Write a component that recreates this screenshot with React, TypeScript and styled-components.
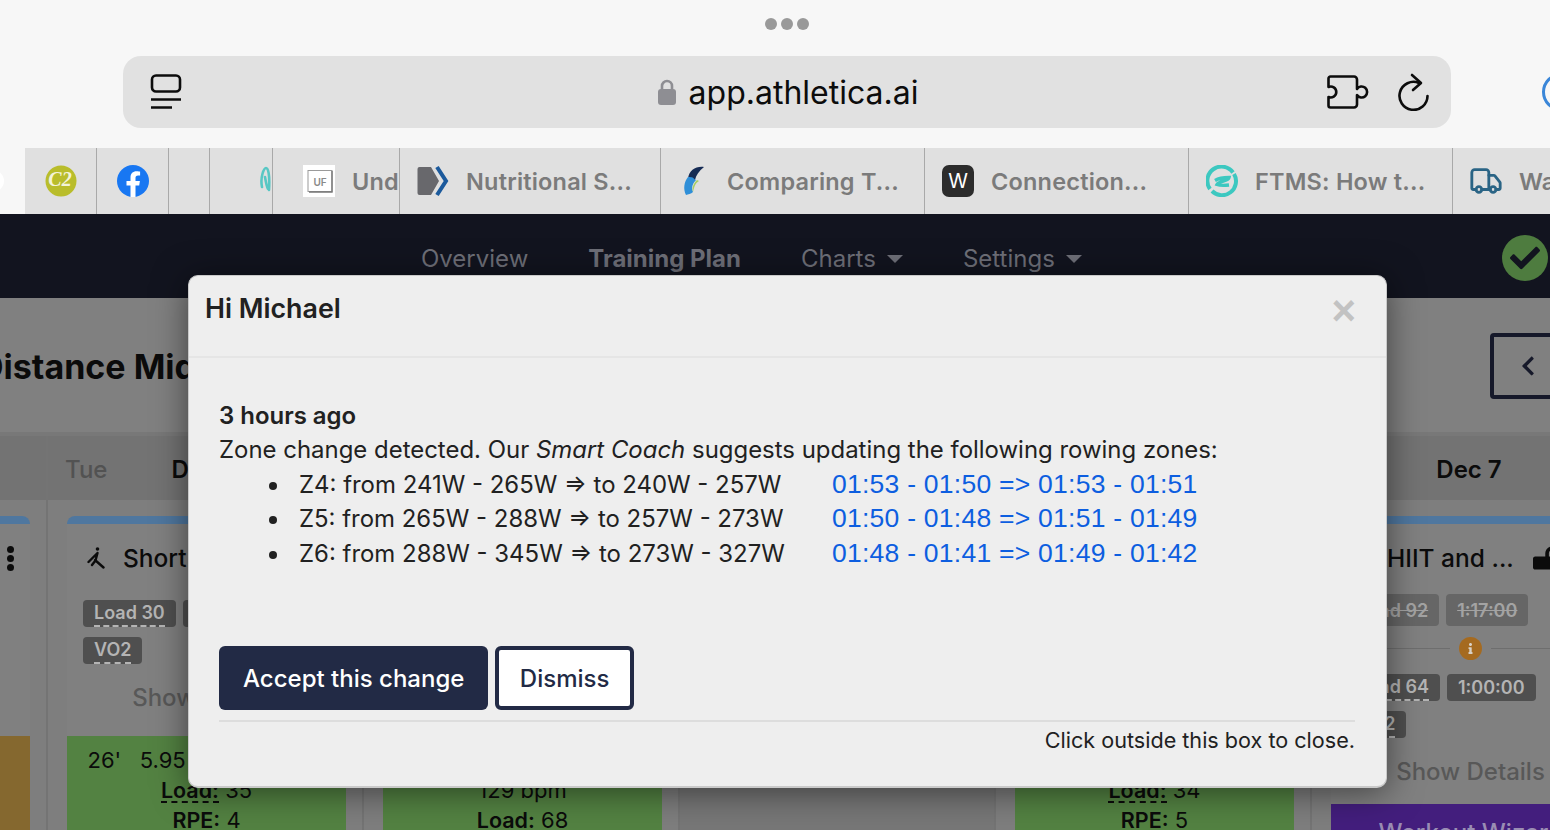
import React from "react";
import styled, { createGlobalStyle } from "styled-components";
import { Truck } from "lucide-react";
import { FaLockOpen, FaChevronLeft, FaCheck, FaInfo } from "react-icons/fa";

const GlobalStyle = createGlobalStyle`
    * { box-sizing: border-box; }
    html, body { margin: 0; padding: 0; background: #808080; }
    body { font-family: Inter, "Liberation Sans", sans-serif; }
`;

const Screen = styled.div`
    position: relative;
    width: 1550px;
    height: 830px;
    overflow: hidden;
    background: #808080;
`;

/* browser chrome */
const Chrome = styled.div`
    height: 148px;
    background: #f7f7f7;
    overflow: hidden;
`;

const DotsRow = styled.div`
    height: 56px;
    display: flex;
    align-items: center;
    justify-content: center;
    gap: 4px;
    padding: 0 0 8px 24px;
`;

const Dot = styled.span`
    width: 12px;
    height: 12px;
    border-radius: 50%;
    background: #999999;
`;

const AddressRow = styled.div`
    display: flex;
    align-items: center;
    gap: 91px;
    padding-left: 123px;
`;

const AddressBar = styled.div`
    flex: 0 0 1328px;
    height: 72px;
    display: flex;
    align-items: center;
    padding: 0 21px 0 27px;
    border-radius: 18px;
    background: #e1e1e1;
`;

const AddressSide = styled.div<{ $end?: boolean }>`
    flex: 1;
    display: flex;
    align-items: center;
    justify-content: ${p => (p.$end ? "flex-end" : "flex-start")};
    gap: 29px;
`;

const Url = styled.div`
    display: flex;
    align-items: center;
    gap: 13px;
    margin-right: 4px;
    font-size: 32px;
    color: #0c0c0c;
`;

const ProfileRing = styled.div`
    flex: none;
    width: 38px;
    height: 38px;
    border: 3px solid #3a86d8;
    border-radius: 50%;
`;

const TabStrip = styled.div`
    height: 66px;
    display: flex;
    background: #f7f7f7;
    overflow: hidden;
`;

const TabLead = styled.div`
    flex: 0 0 25px;
    display: flex;
    align-items: center;
`;

const TabLeadDot = styled.span`
    width: 22px;
    height: 22px;
    margin-left: -18px;
    border-radius: 50%;
    background: #ffffff;
`;

const Tab = styled.div<{ $width: number; $pad: number }>`
    flex: 0 0 ${p => p.$width}px;
    height: 66px;
    display: flex;
    align-items: center;
    gap: 17px;
    padding-left: ${p => p.$pad}px;
    overflow: hidden;
    background: #e0e0e0;
    border-right: 1px solid #a9a9a9;
`;

const TabIcon = styled.svg`
    flex: none;
    width: 32px;
    height: 32px;
`;

const TruckIcon = styled(Truck)`
    flex: none;
    width: 34px;
    height: 34px;
    margin: 0 -1px;
`;

const TabTitle = styled.span`
    font-size: 23.5px;
    font-weight: 600;
    letter-spacing: 0.2px;
    white-space: nowrap;
    color: #7b7b7b;
`;

/* app nav */
const AppNav = styled.nav`
    height: 84px;
    display: flex;
    align-items: center;
    padding: 4px 2px 0 421px;
    background: #12141f;
`;

const NavLink = styled.span<{ $active?: boolean }>`
    display: flex;
    align-items: center;
    gap: 11px;
    margin-right: 60px;
    font-size: 24px;
    font-weight: ${p => (p.$active ? 700 : 400)};
    color: #6e6f78;
`;

const Caret = styled.i`
    width: 0;
    height: 0;
    margin-top: 2px;
    border-left: 8px solid transparent;
    border-right: 8px solid transparent;
    border-top: 8px solid #6e6f78;
`;

const SyncBadge = styled.div`
    width: 46px;
    height: 46px;
    margin-left: auto;
    display: flex;
    align-items: center;
    justify-content: center;
    border-radius: 50%;
    background: #4e7c3f;
    color: #12141f;
    font-size: 30px;
`;

/* dimmed training plan page */
const PlanHeader = styled.div`
    height: 138px;
    display: flex;
    align-items: center;
    justify-content: space-between;
    padding-top: 2px;
    background: #808080;
    border-bottom: 4px solid #787878;
`;

const PlanTitle = styled.h1`
    margin: 0 0 0 -21px;
    font-size: 34px;
    font-weight: 700;
    white-space: nowrap;
    color: #0b0b0b;
`;

const WeekButton = styled.div`
    flex: none;
    width: 90px;
    height: 66px;
    margin-right: -30px;
    display: flex;
    align-items: center;
    padding-left: 23px;
    border: 4px solid #16192a;
    border-radius: 4px;
    color: #16192a;
    font-size: 22px;
`;

const Week = styled.div`
    width: 1896px;
    margin-left: -268px;
    display: grid;
    grid-template-columns: repeat(6, 316px);
`;

const DayColumn = styled.div<{ $empty?: boolean }>`
    height: 394px;
    overflow: hidden;
    background: ${p => (p.$empty ? "#777777" : "#7e7e7e")};
    border-right: 2px solid #747474;
`;

const DayHead = styled.div`
    position: relative;
    height: 64px;
    display: flex;
    align-items: center;
    justify-content: center;
    padding-top: 2px;
    background: #737373;
`;

const DayName = styled.span`
    position: absolute;
    left: 17px;
    font-size: 24px;
    font-weight: 500;
    color: #525252;
`;

const DayDate = styled.span`
    font-size: 24px;
    font-weight: 600;
    color: #0b0b0b;
`;

const Card = styled.div`
    width: 279px;
    margin: 16px 0 0 19px;
    border-radius: 8px 8px 0 0;
    overflow: hidden;
    background: #808080;
    border-top: 8px solid #4f779f;
`;

const CardMain = styled.div<{ $height: number }>`
    height: ${p => p.$height}px;
    padding: 0 16px;
    border-radius: 0 0 8px 8px;
`;

const CardTitleRow = styled.div`
    height: 68px;
    display: flex;
    align-items: center;
    padding: 0 0 0 4px;
`;

const TitleIcon = styled.svg`
    flex: none;
    width: 18px;
    height: 22px;
    margin-right: 18px;
`;

const CardTitle = styled.span`
    flex: 0 0 146px;
    font-size: 24.5px;
    font-weight: 500;
    white-space: nowrap;
    color: #0b0b0b;
`;

const CardMenu = styled.div`
    height: 68px;
    display: flex;
    flex-direction: column;
    align-items: flex-end;
    justify-content: center;
    gap: 2px;
`;

const MenuDot = styled.span`
    width: 7px;
    height: 7px;
    border-radius: 50%;
    background: #0b0b0b;
`;

const Tags = styled.div<{ $top?: number }>`
    display: flex;
    flex-wrap: wrap;
    gap: 10px 7px;
    margin-top: ${p => p.$top ?? 0}px;
`;

const Tag = styled.span<{ $struck?: boolean }>`
    height: ${p => (p.$struck ? 32 : 27)}px;
    display: inline-flex;
    align-items: center;
    padding: 0 11px;
    border-radius: 4px;
    background: ${p => (p.$struck ? "#666666" : "#4f4f4f")};
    font-size: 18px;
    font-weight: 600;
    white-space: nowrap;
    color: ${p => (p.$struck ? "#a3a3a3" : "#b4b4b4")};
    text-decoration: ${p => (p.$struck ? "line-through" : "none")};
`;

const Dashed = styled.span`
    border-bottom: 2px dashed currentColor;
    line-height: 24px;
`;

const ShowDetails = styled.div`
    margin-top: 19px;
    text-align: center;
    font-size: 24px;
    font-weight: 500;
    color: #585858;
`;

const TagDivider = styled.div`
    display: flex;
    align-items: center;
    gap: 9px;
    height: 48px;
    padding-bottom: 4px;
    &::before, &::after {
        content: "";
        flex: 1;
        height: 1px;
        background: #6e6e6e;
    }
`;

const InfoDot = styled.span`
    width: 23px;
    height: 23px;
    display: flex;
    align-items: center;
    justify-content: center;
    border-radius: 50%;
    background: #a56a1f;
    color: #d8d0c4;
    font-size: 11px;
`;

const Summary = styled.div<{ $tone: "green" | "amber" }>`
    height: 120px;
    padding-top: 9px;
    background: ${p => (p.$tone === "green" ? "#538242" : "#85682f")};
    text-align: center;
    font-size: 22px;
    line-height: 30px;
    color: #0b0b0b;
`;

const SummaryLine = styled.div`
    height: 30px;
    white-space: pre;
`;

const SummaryLabel = styled.b`
    font-size: 21.5px;
    font-weight: 600;
`;

const LoadLabel = styled(SummaryLabel)`
    display: inline-block;
    height: 28px;
    border-bottom: 2px dashed #0b0b0b;
`;

const WizardBar = styled.div`
    height: 40px;
    padding-top: 14px;
    background: #431e7d;
    text-align: center;
    font-size: 24px;
    font-weight: 500;
    color: #9a8db3;
`;

/* modal */
const Modal = styled.div`
    position: absolute;
    left: 188px;
    top: 275px;
    width: 1199px;
    height: 513px;
    background: #eeeeee;
    border-radius: 10px;
    border: 1px solid #c9c9c9;
    border-bottom-width: 2px;
    box-shadow: 0 4px 34px rgba(0, 0, 0, 0.5);
    color: #212121;
`;

const ModalHeader = styled.div`
    height: 82px;
    display: flex;
    align-items: flex-start;
    justify-content: space-between;
    padding: 13px 30px 0 16px;
    border-bottom: 2px solid #e5e5e5;
`;

const ModalTitle = styled.h5`
    margin: 0;
    font-size: 26.8px;
    line-height: 38px;
    font-weight: 600;
`;

const CloseMark = styled.span`
    margin-top: 1px;
    font-family: "Liberation Sans", sans-serif;
    font-size: 42px;
    line-height: 42px;
    font-weight: 700;
    color: #c2c2c2;
`;

const ModalBody = styled.div`
    padding: 41px 31px 0 30px;
    font-size: 23.95px;
    line-height: 34.5px;
`;

const WhenLine = styled.div`
    font-weight: 600;
`;

const IntroLine = styled.div`
    margin-top: -0.5px;
`;

const ZoneList = styled.ul`
    margin: 0;
    padding: 0 0 0 80px;
    list-style: none;
`;

const ZoneItem = styled.li`
    position: relative;
    height: 34.5px;
    &::before {
        content: "";
        position: absolute;
        left: -30px;
        top: 14px;
        width: 8px;
        height: 8px;
        border-radius: 50%;
        background: #212121;
    }
`;

const ZoneText = styled.span`
    display: inline-block;
    width: 533px;
`;

const PaceText = styled.span`
    font-family: "Liberation Sans", sans-serif;
    font-size: 26.5px;
    line-height: 0;
    letter-spacing: 0.25px;
    color: #0d5ee0;
`;

const ModalActions = styled.div`
    display: flex;
    gap: 7px;
    margin-top: 75px;
`;

const ActionButton = styled.button<{ $outline?: boolean }>`
    height: 64px;
    padding: 0 ${p => (p.$outline ? 20.5 : 24)}px;
    border: 4px solid #222a45;
    border-width: ${p => (p.$outline ? 4 : 0)}px;
    border-radius: 6px;
    background: ${p => (p.$outline ? "#ffffff" : "#222a45")};
    color: ${p => (p.$outline ? "#222a45" : "#ffffff")};
    font-family: Inter, sans-serif;
    font-size: 24px;
    font-weight: 500;
`;

const ModalFoot = styled.div`
    margin-top: 10px;
    padding-top: 2px;
    border-top: 2px solid #dddddd;
    text-align: right;
    font-size: 21.6px;
    line-height: 32px;
`;

const PanelsIcon = () => (
    <svg width="32" height="36" viewBox="0 0 32 36" fill="none" stroke="#0c0c0c" strokeWidth="2.6">
        <rect x="2" y="1.5" width="28" height="16" rx="4" />
        <path d="M1 25.5h30M1 33.5h21" />
    </svg>
);

const LockIcon = () => (
    <svg width="18" height="26" viewBox="0 0 18 26">
        <path d="M4 11V7a5 5 0 0 1 10 0v4" fill="none" stroke="#8e8e93" strokeWidth="2.6" />
        <rect x="0" y="10" width="18" height="16" rx="3" fill="#8e8e93" />
    </svg>
);

const PuzzleIcon = () => (
    <svg width="42" height="34" viewBox="0 0 42 34" fill="none" stroke="#0c0c0c" strokeWidth="2.6" strokeLinejoin="round">
        <path d="M3.5 1.5H27a3 3 0 0 1 3 3V14a5.5 5.5 0 1 1 0 6V29.5a3 3 0 0 1-3 3H3.5a2 2 0 0 1-2-2V22a5.5 5.5 0 1 0 0-10V3.5a2 2 0 0 1 2-2z" />
    </svg>
);

const ReloadIcon = () => (
    <svg width="32" height="38" viewBox="0 0 32 38" fill="none" stroke="#0c0c0c" strokeWidth="2.6" strokeLinecap="round" strokeLinejoin="round">
        <path d="M21 10A14 14 0 1 0 29.5 23" />
        <path d="M14 2l9 8-8 7" />
    </svg>
);

const RowerIcon = () => (
    <TitleIcon viewBox="0 0 18 22" fill="none" stroke="#0b0b0b" strokeWidth="2.4" strokeLinecap="round">
        <circle cx="10.5" cy="2" r="1.8" fill="#0b0b0b" stroke="none" />
        <path d="M10.5 6L8.5 13.5M10 6.5L1.5 15M8 13l8.5 7.5M8.5 13.5L5 18" />
    </TitleIcon>
);

interface TabData {
    width: number;
    pad: number;
    title?: string;
    icon?: React.ReactNode;
}

const tabs: TabData[] = [
    {
        width: 72, pad: 20, icon: (
            <TabIcon viewBox="0 0 32 32">
                <circle cx="16" cy="16" r="15.5" fill="#b9bd2b" />
                <text x="15" y="21" textAnchor="middle" fontFamily="Liberation Serif" fontStyle="italic" fontWeight="700" fontSize="20" fill="#f3f3d8">C2</text>
            </TabIcon>
        )
    },
    {
        width: 72, pad: 20, icon: (
            <TabIcon viewBox="0 0 32 32">
                <circle cx="16" cy="16" r="16" fill="#1877f2" />
                <path d="M22.2 20.6l.7-4.6h-4.4v-3c0-1.3.6-2.5 2.6-2.5h2V6.6s-1.8-.3-3.6-.3c-3.6 0-6 2.2-6 6.2V16h-4v4.6h4V32h5V20.6z" fill="#ffffff" />
            </TabIcon>
        )
    },
    { width: 41, pad: 0 },
    {
        width: 63, pad: 50, icon: (
            <TabIcon viewBox="0 0 32 32">
                <path d="M2 22C0 12 4 3 6 3s4 6 3 22M5 12c1 6 2 10 3 12" fill="none" stroke="#58c7c4" strokeWidth="2.6" strokeLinecap="round" />
            </TabIcon>
        )
    },
    {
        width: 127, pad: 30, title: "Und", icon: (
            <TabIcon viewBox="0 0 32 32">
                <rect width="32" height="32" fill="#ffffff" />
                <rect x="5" y="5.5" width="24" height="21" fill="none" stroke="#9a9a9a" strokeWidth="1" />
                <path d="M29 6v21H6" fill="none" stroke="#777777" strokeWidth="1.4" />
                <text x="17" y="20.5" textAnchor="middle" fontFamily="Inter" fontWeight="600" fontSize="10" fill="#8a8a8a">UF</text>
            </TabIcon>
        )
    },
    {
        width: 261, pad: 17, title: "Nutritional S...", icon: (
            <TabIcon viewBox="0 0 32 32">
                <path d="M2.5 2H14l8 14-8 14H2.5A2 2 0 0 1 .5 28V4a2 2 0 0 1 2-2z" fill="#68686c" />
                <path d="M20 2l9 14-9 14" fill="none" stroke="#1c5a9c" strokeWidth="4" />
            </TabIcon>
        )
    },
    {
        width: 264, pad: 17, title: "Comparing T...", icon: (
            <TabIcon viewBox="0 0 32 32">
                <path d="M26 2c-8-1-15 3-16 12l7 1c1-5 4-9 9-13z" fill="#162c55" />
                <path d="M10 12C6 17 5 24 8 30c2-1 5-1 7-3-2-5 0-9 3-12l-2-1c0-1-1-2-6-2z" fill="#2f8fd8" />
                <path d="M15 27c-1-4 0-8 4-12l2 1c-4 2-5 7-6 11z" fill="#a8cf63" />
            </TabIcon>
        )
    },
    {
        width: 264, pad: 17, title: "Connection...", icon: (
            <TabIcon viewBox="0 0 32 32">
                <rect width="32" height="32" rx="7" fill="#2c2c2c" />
                <text x="16" y="23" textAnchor="middle" fontFamily="Inter" fontSize="20" fill="#ffffff">W</text>
            </TabIcon>
        )
    },
    {
        width: 264, pad: 17, title: "FTMS: How t...", icon: (
            <TabIcon viewBox="0 0 32 32" fill="none" stroke="#3cc8c0" strokeWidth="4">
                <path d="M4 24A14 14 0 0 1 27 7.5" />
                <path d="M28 9A14 14 0 0 1 6 26" />
                <path d="M9 15.5c5-3 10-3 14-3-1 4-10 3-12 7 4 1.5 8 1 12 .5" strokeWidth="3.4" />
            </TabIcon>
        )
    },
    { width: 264, pad: 17, title: "Wa", icon: <TruckIcon color="#2a6485" strokeWidth={2} /> },
];

const zones = [
    { text: "Z4: from 241W - 265W ⇒ to 240W - 257W", pace: "01:53 - 01:50 => 01:53 - 01:51" },
    { text: "Z5: from 265W - 288W ⇒ to 257W - 273W", pace: "01:50 - 01:48 => 01:51 - 01:49" },
    { text: "Z6: from 288W - 345W ⇒ to 273W - 327W", pace: "01:48 - 01:41 => 01:49 - 01:42" },
];

const App: React.FC = () => {
    return (
        <Screen>
            <GlobalStyle />
            <Chrome>
                <DotsRow><Dot /><Dot /><Dot /></DotsRow>
                <AddressRow>
                    <AddressBar>
                        <AddressSide><PanelsIcon /></AddressSide>
                        <Url><LockIcon />app.athletica.ai</Url>
                        <AddressSide $end>
                            <PuzzleIcon />
                            <ReloadIcon />
                        </AddressSide>
                    </AddressBar>
                    <ProfileRing />
                </AddressRow>
            </Chrome>
            <TabStrip>
                <TabLead><TabLeadDot /></TabLead>
                {tabs.map((t, i) => (
                    <Tab key={i} $width={t.width} $pad={t.pad}>
                        {t.icon}
                        {t.title && <TabTitle>{t.title}</TabTitle>}
                    </Tab>
                ))}
            </TabStrip>
            <AppNav>
                <NavLink>Overview</NavLink>
                <NavLink $active>Training Plan</NavLink>
                <NavLink>Charts <Caret /></NavLink>
                <NavLink>Settings <Caret /></NavLink>
                <SyncBadge><FaCheck /></SyncBadge>
            </AppNav>
            <PlanHeader>
                <PlanTitle>Distance Mid</PlanTitle>
                <WeekButton><FaChevronLeft /></WeekButton>
            </PlanHeader>
            <Week>
                <DayColumn>
                    <DayHead />
                    <Card>
                        <CardMain $height={212}>
                            <CardMenu><MenuDot /><MenuDot /><MenuDot /></CardMenu>
                        </CardMain>
                        <Summary $tone="amber" />
                    </Card>
                </DayColumn>
                <DayColumn>
                    <DayHead><DayName>Tue</DayName><DayDate>Dec 3</DayDate></DayHead>
                    <Card>
                        <CardMain $height={212}>
                            <CardTitleRow><RowerIcon /><CardTitle>Short</CardTitle></CardTitleRow>
                            <Tags $top={8}>
                                <Tag><Dashed>Load 30</Dashed></Tag>
                                <Tag>00:26:00</Tag>
                                <Tag><Dashed>VO2</Dashed></Tag>
                            </Tags>
                            <ShowDetails>Show Details</ShowDetails>
                        </CardMain>
                        <Summary $tone="green">
                            <SummaryLine>{"26'   5.95 km   115 bpm"}</SummaryLine>
                            <SummaryLine><LoadLabel>Load:</LoadLabel> 35</SummaryLine>
                            <SummaryLine><SummaryLabel>RPE:</SummaryLabel> 4</SummaryLine>
                        </Summary>
                    </Card>
                </DayColumn>
                <DayColumn>
                    <DayHead />
                    <Card>
                        <CardMain $height={212} />
                        <Summary $tone="green">
                            <SummaryLine> </SummaryLine>
                            <SummaryLine>129 bpm</SummaryLine>
                            <SummaryLine><SummaryLabel>Load:</SummaryLabel> 68</SummaryLine>
                        </Summary>
                    </Card>
                </DayColumn>
                <DayColumn $empty>
                    <DayHead />
                </DayColumn>
                <DayColumn>
                    <DayHead />
                    <Card>
                        <CardMain $height={212} />
                        <Summary $tone="green">
                            <SummaryLine> </SummaryLine>
                            <SummaryLine><LoadLabel>Load:</LoadLabel> 34</SummaryLine>
                            <SummaryLine><SummaryLabel>RPE:</SummaryLabel> 5</SummaryLine>
                        </Summary>
                    </Card>
                </DayColumn>
                <DayColumn>
                    <DayHead><DayDate>Dec 7</DayDate></DayHead>
                    <Card>
                        <CardMain $height={280}>
                            <CardTitleRow>
                                <RowerIcon />
                                <CardTitle>HIIT and ...</CardTitle>
                                <FaLockOpen size={26} color="#0b0b0b" />
                            </CardTitleRow>
                            <Tags $top={2}>
                                <Tag $struck>Load 92</Tag>
                                <Tag $struck>1:17:00</Tag>
                            </Tags>
                            <TagDivider><InfoDot><FaInfo /></InfoDot></TagDivider>
                            <Tags>
                                <Tag><Dashed>Load 64</Dashed></Tag>
                                <Tag>1:00:00</Tag>
                                <Tag><Dashed>VO2</Dashed></Tag>
                            </Tags>
                            <ShowDetails>Show Details</ShowDetails>
                        </CardMain>
                        <WizardBar>Workout Wizard</WizardBar>
                    </Card>
                </DayColumn>
            </Week>
            <Modal>
                <ModalHeader>
                    <ModalTitle>Hi Michael</ModalTitle>
                    <CloseMark>×</CloseMark>
                </ModalHeader>
                <ModalBody>
                    <WhenLine>3 hours ago</WhenLine>
                    <IntroLine>Zone change detected. Our <em>Smart Coach</em> suggests updating the following rowing zones:</IntroLine>
                    <ZoneList>
                        {zones.map(z => (
                            <ZoneItem key={z.text}>
                                <ZoneText>{z.text}</ZoneText>
                                <PaceText>{z.pace}</PaceText>
                            </ZoneItem>
                        ))}
                    </ZoneList>
                    <ModalActions>
                        <ActionButton>Accept this change</ActionButton>
                        <ActionButton $outline>Dismiss</ActionButton>
                    </ModalActions>
                    <ModalFoot>Click outside this box to close.</ModalFoot>
                </ModalBody>
            </Modal>
        </Screen>
    );
};

export default App;
